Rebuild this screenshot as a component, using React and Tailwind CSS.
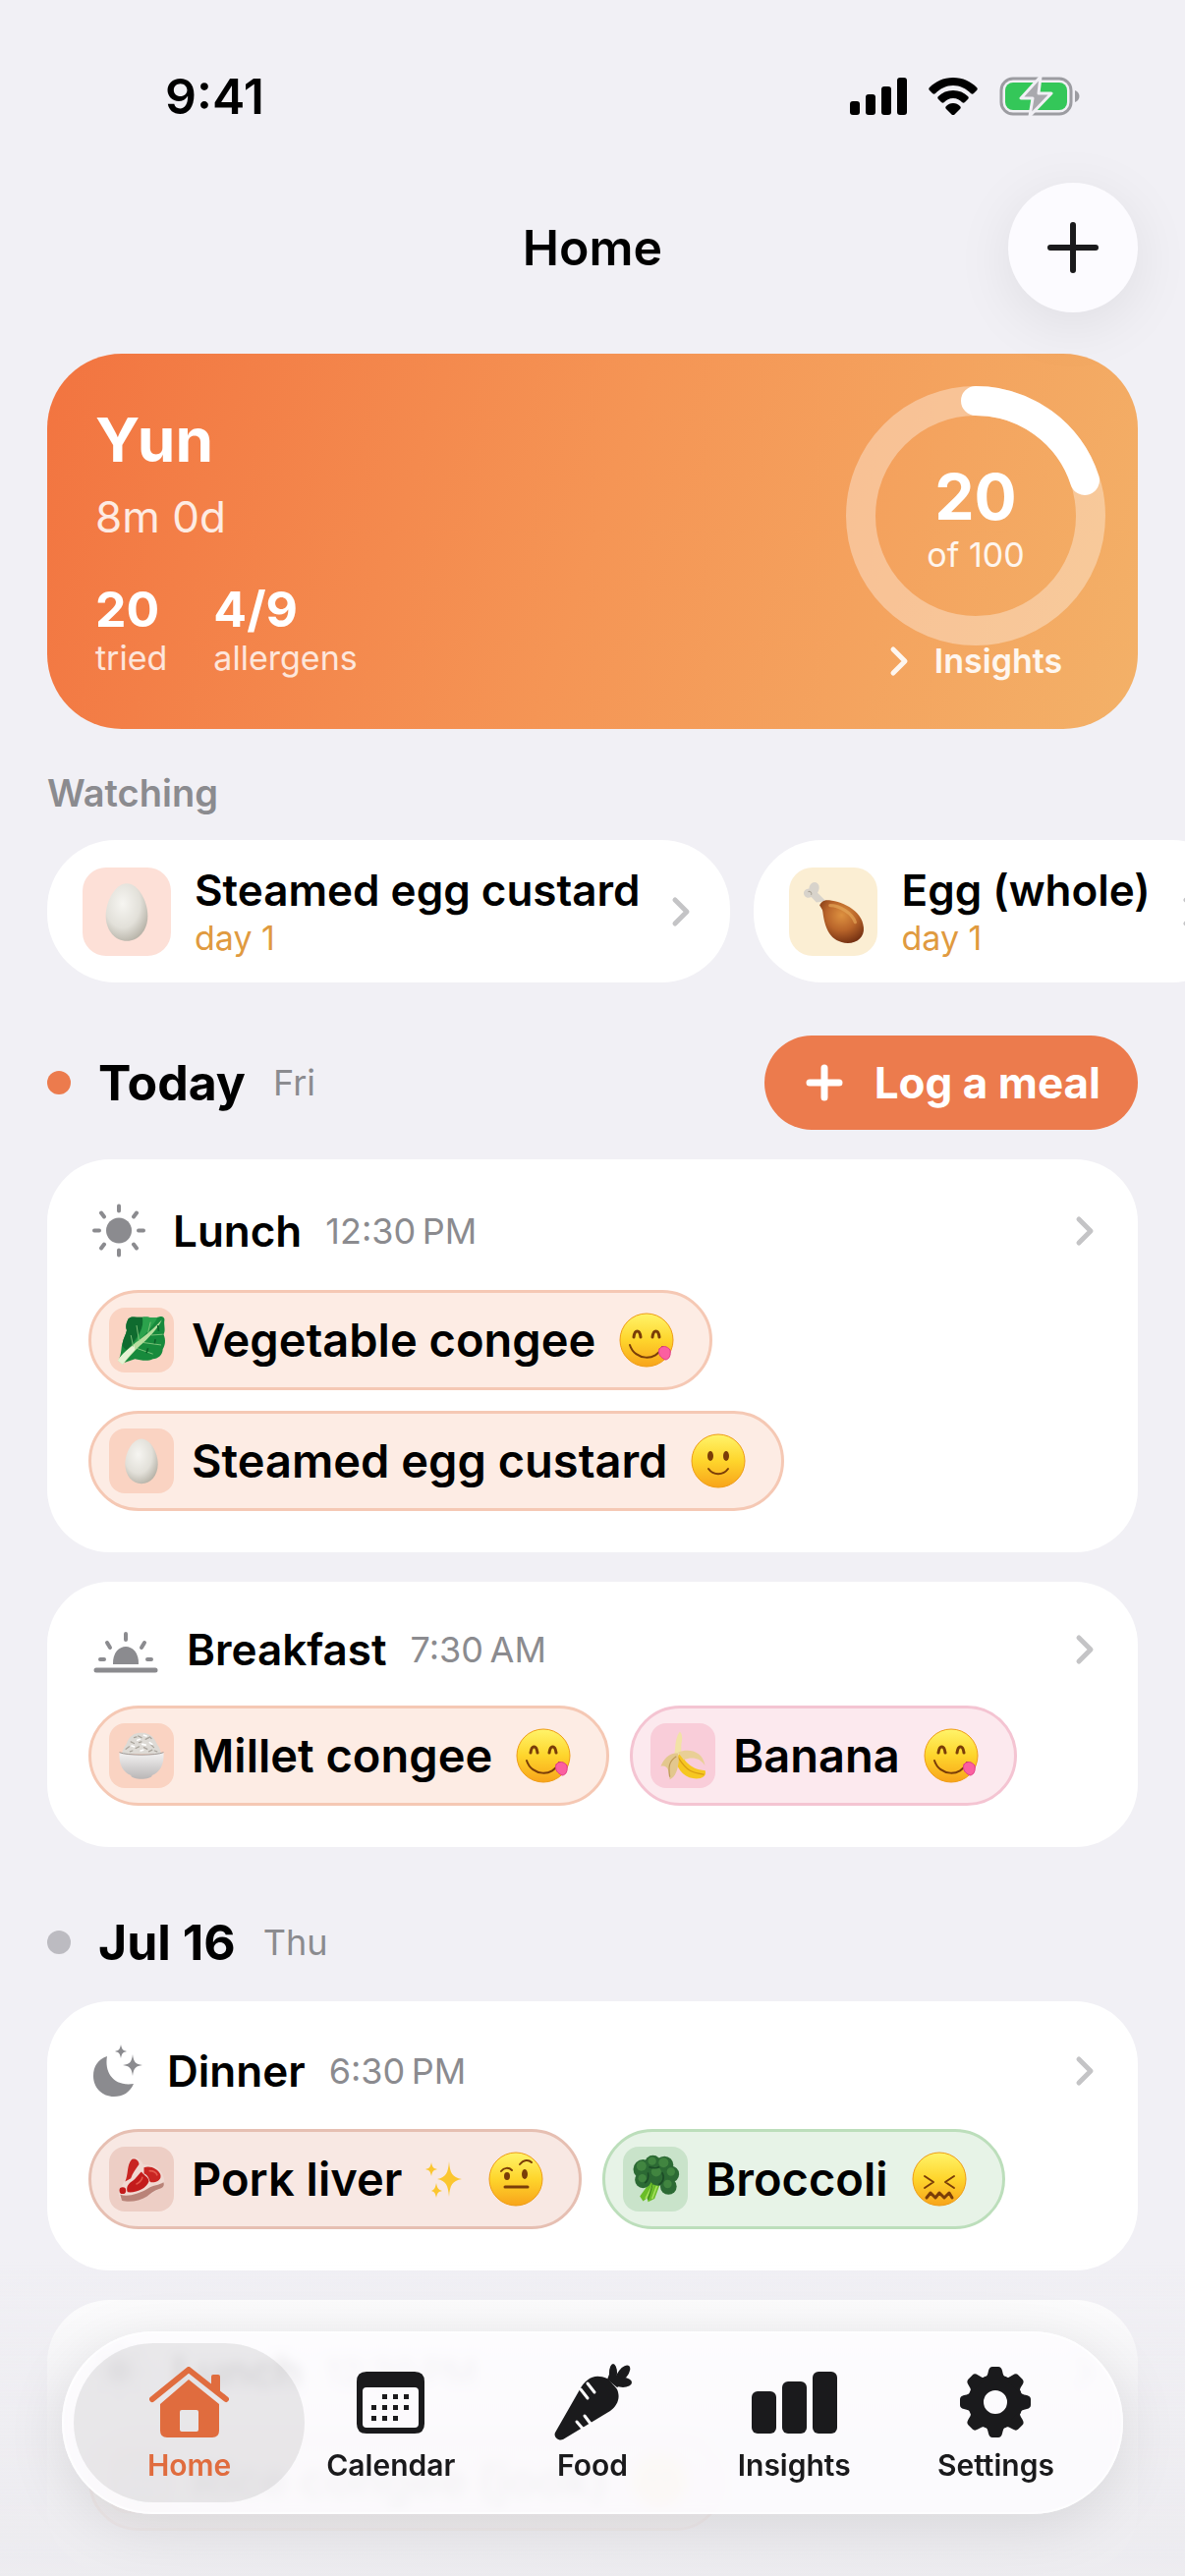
import React, { useState } from 'react';

const watching = [
  { id: 1, name: 'Steamed egg custard', icon: 'egg', day: 'day 1', tile: 'bg-[#fde0d7]' },
  { id: 2, name: 'Egg (whole)', icon: 'drumstick', day: 'day 1', tile: 'bg-[#fbeed3]' },
];

const days = [
  {
    id: 'today',
    title: 'Today',
    weekday: 'Fri',
    dot: 'bg-[#ec7b4d]',
    canLog: true,
    meals: [
      {
        id: 'lunch',
        name: 'Lunch',
        time: '12:30\u202fPM',
        icon: 'sun',
        foods: [
          { name: 'Vegetable congee', icon: 'greens', mood: 'yum', tone: 'orange' },
          { name: 'Steamed egg custard', icon: 'egg', mood: 'smile', tone: 'orange' },
        ],
      },
      {
        id: 'breakfast',
        name: 'Breakfast',
        time: '7:30\u202fAM',
        icon: 'sunrise',
        foods: [
          { name: 'Millet congee', icon: 'rice', mood: 'yum', tone: 'orange' },
          { name: 'Banana', icon: 'banana', mood: 'yum', tone: 'pink' },
        ],
      },
    ],
  },
  {
    id: 'jul16',
    title: 'Jul 16',
    weekday: 'Thu',
    dot: 'bg-[#bcbbc1]',
    canLog: false,
    meals: [
      {
        id: 'dinner',
        name: 'Dinner',
        time: '6:30\u202fPM',
        icon: 'moon',
        foods: [
          { name: 'Pork liver', icon: 'meat', mood: 'doubt', tone: 'red', isNew: true },
          { name: 'Broccoli', icon: 'broccoli', mood: 'yuck', tone: 'green' },
        ],
      },
      {
        id: 'lunch16',
        name: 'Lunch',
        time: '12:30\u202fPM',
        icon: 'sun',
        foods: [{ name: 'Rice congee (jook)', icon: 'rice', mood: 'smile', tone: 'orange' }],
      },
    ],
  },
];

const tones = {
  orange: { chip: 'bg-[#fdece4] border-[#f5c8b4]', tile: 'bg-[#fad3c2]' },
  pink: { chip: 'bg-[#fce9ee] border-[#f4c4d2]', tile: 'bg-[#f9cdd9]' },
  red: { chip: 'bg-[#f8e8e3] border-[#e6bfb2]', tile: 'bg-[#edcec5]' },
  green: { chip: 'bg-[#e7f3e7] border-[#bcdebb]', tile: 'bg-[#c9e3ca]' },
};

/* ---------- food drawings ---------- */

function FoodIcon({ name, className }) {
  return (
    <svg viewBox="0 0 60 60" className={className} aria-hidden="true">
      <defs>
        <radialGradient id="eggShell" cx="0.4" cy="0.35" r="0.7">
          <stop offset="0" stopColor="#f6f5f1" />
          <stop offset="0.6" stopColor="#e2e0d9" />
          <stop offset="1" stopColor="#b5b1a6" />
        </radialGradient>
        <radialGradient id="chicken" cx="0.5" cy="0.35" r="0.7">
          <stop offset="0" stopColor="#dd9140" />
          <stop offset="0.5" stopColor="#b9652a" />
          <stop offset="1" stopColor="#6f2c10" />
        </radialGradient>
        <linearGradient id="bowl" x1="0" y1="0" x2="0" y2="1">
          <stop offset="0" stopColor="#f4f3f3" />
          <stop offset="1" stopColor="#b9b6b6" />
        </linearGradient>
      </defs>
      {name === 'egg' && (
        <path d="M30 3C41 3 50 20 50 34S41 58 30 58 10 48 10 34 19 3 30 3Z" fill="url(#eggShell)" />
      )}
      {name === 'drumstick' && (
        <>
          <path d="M14 21 9 16C5 18 1 15 2 11 3 9 5 8 7 8 7 4 11 0 15 3 18 6 16 10 15 12L23 20Z" fill="#d8d3cb" />
          <path d="M6 11C8 10 10 12 9 14" stroke="#aaa397" strokeWidth="1" fill="none" />
          <path d="M17 24C18 21 21 19 24 19 36 19 58 28 59 45 60 54 53 60 44 60 27 59 22 46 20 30 20 28 18 26 17 24Z" fill="url(#chicken)" />
          <path d="M27 24C36 24 48 31 51 40" stroke="#eaae5e" strokeWidth="3" strokeLinecap="round" fill="none" opacity="0.6" />
        </>
      )}
      {name === 'greens' && (
        <>
          <path d="M14 4C18 0 25 3 31 2 38 1 44 4 50 2 54 0 59 2 58 6 57 12 60 18 57 23 60 30 59 36 56 41 56 48 50 53 44 53 37 57 28 54 22 53L8 58 3 52C6 44 5 38 7 33 8 27 11 24 12 18 10 13 12 8 14 4Z" fill="#178a3c" />
          <path d="M14 4C18 0 25 3 31 2 34 12 28 24 12 42 8 40 6 37 7 33 8 27 11 24 12 18 10 13 12 8 14 4Z" fill="#0f6b2f" />
          <path d="M31 2C40 1 44 4 50 2 42 16 28 30 14 44 26 28 34 14 31 2Z" fill="#2ba24c" />
          <path d="M1 55C8 44 22 34 30 28 40 20 48 13 55 5 50 16 38 28 28 37 20 45 12 54 7 60Z" fill="#b9dea0" />
          <path d="M1 55C6 47 14 41 21 36L22 42C16 48 11 54 7 60Z" fill="#e6f3d4" />
          <path d="M20 38 17 24M27 31 24 12M38 21 41 8M24 40 44 47M32 33 54 36M42 24 56 23" stroke="#8bcb82" strokeWidth="1" fill="none" />
          <path d="M47 29 46 34M38 40 36 46M50 12 51 19" stroke="#0c6129" strokeWidth="2" fill="none" />
        </>
      )}
      {name === 'rice' && (
        <>
          <path d="M6 28C7 20 12 17 13 12 18 3 24 2 30 2S43 4 47 12C49 17 53 20 54 28Z" fill="#dddad5" />
          <path d="M11 22l4-3M17 13l4 2M26 6l4 2M35 10l4-2M42 17l3 3M23 21l4-2M33 20l4 2M16 25l3-1M39 25l4-2M27 14l3-1M46 24l3 1M21 8l3-1M40 7l2 2" stroke="#a9a49c" strokeWidth="1.500" strokeLinecap="round" />
          <path d="M18 18l3 1M25 11l3-1M31 16l4 1M40 14l3 2M29 24l3-1M33 5l3 1" stroke="#ffffff" strokeWidth="2" strokeLinecap="round" />
          <path d="M3 26C12 30 48 30 57 26 58 42 52 50 43 54 42 60 18 60 17 54 8 50 2 42 3 26Z" fill="url(#bowl)" />
          <path d="M3 26C12 30 48 30 57 26" fill="none" stroke="#8e8a89" strokeWidth="1" />
        </>
      )}
      {name === 'banana' && (
        <>
          <path d="M26 1C29 2 30 9 28 16L28 33 18 34C22 24 19 11 26 1Z" fill="#f2e2a6" />
          <path d="M27 27C35 44 49 48 57 48 59 53 56 57 49 58 36 59 23 51 21 33Z" fill="#f6c721" />
          <path d="M24 26C37 21 54 24 57 42 51 33 42 31 31 35Z" fill="#e9cf96" />
          <path d="M24 32C36 51 43 51 56 53" stroke="#d89c15" strokeWidth="1.500" fill="none" />
          <path d="M24 27C14 26 7 33 3 43 11 41 13 47 14 59 21 56 24 47 25 36Z" fill="#e3c78e" />
          <path d="M22 31C13 37 12 43 14 56" stroke="#bf9a57" strokeWidth="1.500" fill="none" />
        </>
      )}
      {name === 'meat' && (
        <>
          <path d="M18 4C23 2 30 6 32 12 38 13 47 13 52 19 57 24 59 32 57 39 50 43 44 46 37 51 28 57 14 59 6 56 2 52 1 46 3 42 7 38 8 34 10 30 14 22 12 10 18 4Z" fill="#f0d9d2" />
          <path d="M4 49C14 52 26 48 37 42 45 37 51 38 57 34 58 38 57 40 54 41 47 43 43 46 37 51 28 57 14 59 6 56Z" fill="#b98378" />
          <path d="M18 6C23 4 27 8 27 12 23 18 19 23 17 29L10 33C14 25 12 12 18 6Z" fill="#c92522" />
          <path d="M33 16C41 13 50 18 53 24 55 30 50 34 43 34 38 34 41 27 33 23Z" fill="#c92522" />
          <path d="M30 21C33 26 39 27 39 33 36 41 25 47 13 46 11 41 13 36 18 33 24 29 26 24 30 21Z" fill="#c31b1b" />
          <ellipse cx="7" cy="44" rx="4" ry="4" fill="#c31b1b" />
          <path d="M24 36C28 34 31 30 31 28M40 20C45 20 48 22 49 25" stroke="#e4584c" strokeWidth="2" strokeLinecap="round" fill="none" />
        </>
      )}
      {name === 'broccoli' && (
        <>
          <path d="M24 33 11 51 15 57 20 53 21 58 29 54 35 38Z" fill="#6abd28" />
          <path d="M27 37 18 54M32 38 26 54" stroke="#a4df5a" strokeWidth="2" fill="none" />
          <path d="M28 32 21 55" stroke="#3c8a1b" strokeWidth="1.500" fill="none" />
          <g fill="#2c6a34">
            <circle cx="15" cy="18" r="12" />
            <circle cx="27" cy="11" r="10" />
            <circle cx="41" cy="13" r="11" />
            <circle cx="49" cy="24" r="10" />
            <circle cx="34" cy="25" r="13" />
            <circle cx="15" cy="31" r="10" />
            <circle cx="46" cy="39" r="10" />
          </g>
          <g fill="#4b9146" opacity="0.7">
            <circle cx="13" cy="14" r="6" />
            <circle cx="26" cy="8" r="5" />
            <circle cx="40" cy="10" r="6" />
            <circle cx="49" cy="21" r="5" />
            <circle cx="31" cy="21" r="6" />
            <circle cx="14" cy="29" r="5" />
            <circle cx="45" cy="36" r="5" />
          </g>
          <path d="M21 22C22 28 20 33 17 35M38 22C42 28 39 35 34 37M22 15C26 17 32 17 35 15" stroke="#1c4d27" strokeWidth="2" fill="none" />
        </>
      )}
    </svg>
  );
}

function Mood({ name }) {
  return (
    <svg viewBox="0 0 56 56" className="size-14 shrink-0" aria-hidden="true">
      <defs>
        <linearGradient id="face" x1="0" y1="0" x2="0" y2="1">
          <stop offset="0" stopColor="#fff46a" />
          <stop offset="0.5" stopColor="#fed52c" />
          <stop offset="1" stopColor="#f8a41a" />
        </linearGradient>
      </defs>
      <circle cx="28" cy="28" r="27" fill="url(#face)" stroke="#ef9c14" strokeWidth="1" />
      {name === 'yum' && (
        <g fill="none" stroke="#7a3d08" strokeWidth="2" strokeLinecap="round">
          <path d="M15 25C16 17 21 17 22 25M34 25C35 17 40 17 41 25" strokeWidth="3" />
          <path d="M11 33C16 49 38 50 44 35" />
          <path d="M41 37C44 33 49 34 52 38 53 43 51 48 47 48 43 46 39 43 41 37Z" fill="#fb5fa0" stroke="#e03c86" strokeWidth="1" />
        </g>
      )}
      {name === 'smile' && (
        <>
          <ellipse cx="20" cy="23" rx="3" ry="5" fill="#7a3d08" />
          <ellipse cx="36" cy="23" rx="3" ry="5" fill="#7a3d08" />
          <path d="M18 36C23 43 33 43 38 36" fill="none" stroke="#7a3d08" strokeWidth="2" strokeLinecap="round" />
        </>
      )}
      {name === 'doubt' && (
        <>
          <ellipse cx="19" cy="25" rx="3" ry="4" fill="#7a3d08" />
          <ellipse cx="37" cy="23" rx="3" ry="5" fill="#7a3d08" />
          <path d="M13 20C16 16 21 16 24 19M32 13C36 8 41 8 44 11" fill="none" stroke="#7a3d08" strokeWidth="2" strokeLinecap="round" />
          <path d="M17 36H40" stroke="#7a3d08" strokeWidth="3" strokeLinecap="round" />
        </>
      )}
      {name === 'yuck' && (
        <g fill="none" stroke="#7a3d08" strokeWidth="2" strokeLinecap="round" strokeLinejoin="round">
          <path d="M13 25 22 31 13 37M43 25 34 31 43 37" />
          <path d="M15 47 19 42 24 47 28 42 33 47 38 42 41 47" strokeWidth="3" />
        </g>
      )}
    </svg>
  );
}

function Sparkles() {
  return (
    <svg viewBox="0 0 38 38" className="size-[38px] shrink-0" fill="#fbc62f" aria-hidden="true">
      <path d="M24 1C25 13 27 17 37 19 27 21 25 25 24 37 23 25 21 21 12 19 21 17 23 13 24 1Z" />
      <path d="M6 2C7 7 8 8 12 9 8 10 7 11 6 16 5 11 4 10 0 9 4 8 5 7 6 2Z" />
      <path d="M11 23C12 28 13 30 17 31 13 32 12 33 11 38 10 33 9 32 6 31 9 30 10 28 11 23Z" />
    </svg>
  );
}

/* ---------- small symbols ---------- */

function MealIcon({ name }) {
  if (name === 'sunrise') {
    return (
      <svg viewBox="-4 0 76 54" className="h-[54px] w-[76px]" fill="none" stroke="#8b8b8f" strokeWidth="5" strokeLinecap="round" aria-hidden="true">
        <path d="M4 48H64" />
        <path d="M34 11V17M15 20 18 25M53 20 50 25M8 37H12M56 37H60" strokeWidth="4" />
        <path d="M21 42C20 18 48 18 47 42Z" fill="#8b8b8f" stroke="none" />
      </svg>
    );
  }
  if (name === 'moon') {
    return (
      <svg viewBox="0 0 56 58" className="h-[58px] w-14" fill="#8b8b8f" aria-hidden="true">
        <path d="M19 14C16 31 26 45 46 42 42 51 35 55 26 55 14 55 5 46 5 34 5 24 10 17 19 14Z" />
        <path d="M33 2C34 7 35 8 39 9 35 10 34 11 33 16 32 11 31 10 27 9 31 8 32 7 33 2Z" />
        <path d="M45 12C46 20 48 22 55 23 48 24 46 26 45 34 44 26 42 24 35 23 42 22 44 20 45 12Z" />
      </svg>
    );
  }
  return (
    <svg viewBox="-1 0 62 60" className="h-[61px] w-[62px]" fill="none" stroke="#8b8b8f" strokeWidth="4" strokeLinecap="round" aria-hidden="true">
      <circle cx="30" cy="30" r="13" fill="#8b8b8f" stroke="none" />
      <path d="M30 5V10M30 50V55M5 30H10M50 30H55M12 12 15 16M48 12 45 16M12 48 15 44M48 48 45 44" />
    </svg>
  );
}

function Chevron({ className }) {
  return (
    <svg viewBox="0 0 20 32" className={className} fill="none" stroke="currentColor" strokeWidth="5" strokeLinecap="round" strokeLinejoin="round" aria-hidden="true">
      <path d="M4 4 16 16 4 28" />
    </svg>
  );
}

function TabIcon({ name }) {
  if (name === 'Home') {
    return (
      <svg viewBox="0 0 81 72" className="h-[72px] w-[81px]" aria-hidden="true">
        <path d="M3 33 40 3 78 33" fill="none" stroke="currentColor" strokeWidth="6" strokeLinecap="round" strokeLinejoin="round" />
        <path d="M63 22V10Q63 8 65 8H70Q72 8 72 10V30Z" fill="currentColor" />
        <path fillRule="evenodd" d="M40 13 71 38V65Q71 72 64 72H18Q11 72 11 65V38ZM33 44Q31 44 31 46V64Q31 66 33 66H48Q50 66 50 64V46Q50 44 48 44Z" fill="currentColor" />
      </svg>
    );
  }
  if (name === 'Calendar') {
    return (
      <svg viewBox="0 0 69 63" className="h-[63px] w-[69px]" fill="currentColor" aria-hidden="true">
        <path fillRule="evenodd" d="M10 0H59Q69 0 69 10V53Q69 63 59 63H10Q0 63 0 53V10Q0 0 10 0ZM10 16Q6 16 6 20V53Q6 57 10 57H59Q63 57 63 53V20Q63 16 59 16Z" />
        <path d="M26 23h5v5h-5zM37 23h5v5h-5zM48 23h5v5h-5zM15 34h5v5h-5zM26 34h5v5h-5zM37 34h5v5h-5zM48 34h5v5h-5zM15 45h5v5h-5zM26 45h5v5h-5zM37 45h5v5h-5z" />
      </svg>
    );
  }
  if (name === 'Food') {
    return (
      <svg viewBox="0 0 79 78" className="h-[78px] w-[79px]" fill="currentColor" aria-hidden="true">
        <path d="M1 70 25 28C33 13 42 10 54 15 56 17 62 23 64 26 68 35 64 43 57 48L9 77C4 79-1 74 1 70Z" />
        <ellipse cx="60" cy="9" rx="4" ry="9" />
        <ellipse cx="70" cy="10" rx="5" ry="10" transform="rotate(38 70 10)" />
        <ellipse cx="70" cy="19" rx="9" ry="5" />
        <path d="M54 16 57 8 64 12 74 19 64 24Z" />
        <path d="M27 26 34 35M34 20 41 29M23 59 29 66M31 53 37 61" stroke="#fdfcfe" strokeWidth="3" strokeLinecap="round" />
      </svg>
    );
  }
  if (name === 'Insights') {
    return (
      <svg viewBox="0 0 87 63" className="h-[63px] w-[87px]" fill="currentColor" aria-hidden="true">
        <rect x="0" y="20" width="25" height="43" rx="6" />
        <rect x="31" y="10" width="25" height="53" rx="6" />
        <rect x="62" y="0" width="25" height="63" rx="6" />
      </svg>
    );
  }
  return (
    <svg viewBox="0 0 72 72" className="size-[72px]" fill="currentColor" aria-hidden="true">
      <circle cx="36" cy="36" r="20" fill="none" stroke="currentColor" strokeWidth="16" />
      {[0, 45, 90, 135, 180, 225, 270, 315].map((angle) => (
        <path key={angle} transform={`rotate(${angle} 36 36)`} d="M25 12Q28 10 29 4 30 0 33 0H39Q42 0 43 4 44 10 47 12Z" />
      ))}
    </svg>
  );
}

/* ---------- sections ---------- */

function StatusBar() {
  return (
    <div className="flex h-[156px] items-center justify-between pt-10 pr-[107px] pl-[168px]">
      <span className="text-[50px] leading-[60px] font-semibold">9:41</span>
      <div className="flex items-center gap-[22px]">
        <svg viewBox="0 0 58 38" className="h-[38px] w-[58px]" aria-hidden="true">
          <rect x="0" y="24" width="10" height="14" rx="3" />
          <rect x="16" y="17" width="10" height="21" rx="3" />
          <rect x="32" y="9" width="10" height="29" rx="3" />
          <rect x="48" y="0" width="10" height="38" rx="3" />
        </svg>
        <svg viewBox="0 0 50 38" className="h-[38px] w-[50px]" aria-hidden="true">
          <path d="M25 0C35 0 43 4 49 10 50 11 50 12 49 13L46 16C45 17 44 17 43 16 38 11 32 8 25 8S12 11 7 16C6 17 5 17 4 16L1 13C0 12 0 11 1 10 7 4 15 0 25 0Z" />
          <path d="M25 13C31 13 36 15 40 19 41 20 41 21 40 22L37 25C36 26 35 26 34 25 32 23 29 21 25 21S18 23 16 25C15 26 14 26 13 25L10 22C9 21 9 20 10 19 14 15 19 13 25 13Z" />
          <path d="M25 26C28 26 30 27 32 29 33 30 33 31 32 32L26 38H24L18 32C17 31 17 30 18 29 20 27 22 26 25 26Z" />
        </svg>
        <svg viewBox="0 0 82 42" className="h-[42px] w-[82px]" aria-hidden="true">
          <rect x="2" y="3" width="71" height="36" rx="12" fill="none" stroke="#9c9ca1" strokeWidth="3" />
          <path d="M77 15C83 17 83 25 77 27Z" fill="#9c9ca1" />
          <rect x="6" y="7" width="63" height="28" rx="8" fill="#34c759" />
          <path d="M42 1 22 23H34L31 41 53 18H40Z" fill="#a9a9ae" stroke="#f1f0f5" strokeWidth="3" strokeLinejoin="round" />
        </svg>
      </div>
    </div>
  );
}

function ProfileCard() {
  return (
    <section className="flex justify-between rounded-[76px] bg-linear-[108deg,#f27440_0%,#f59555_50%,#f3b168_100%] pr-[33px] pl-[49px] text-white">
      <div className="pt-12 pb-[52px]">
        <h2 className="text-[62px] leading-[80px] font-bold">Yun</h2>
        <p className="mt-2 text-[44px] leading-[60px] text-white/85">8m 0d</p>
        <dl className="mt-[34px] flex gap-[47px]">
          <div className="flex flex-col-reverse">
            <dt className="text-[34px] leading-10 text-white/80">tried</dt>
            <dd className="text-[50px] leading-[60px] font-bold">20</dd>
          </div>
          <div className="flex flex-col-reverse">
            <dt className="text-[34px] leading-10 text-white/80">allergens</dt>
            <dd className="text-[50px] leading-[60px] font-bold">4/9</dd>
          </div>
        </dl>
      </div>
      <div className="flex flex-col items-center pt-[33px]">
        <div className="relative size-[264px]">
          <svg viewBox="0 0 264 264" className="size-full" fill="none" stroke="#ffffff" strokeWidth="30" aria-hidden="true">
            <circle cx="132" cy="132" r="117" strokeOpacity="0.35" />
            <path d="M132 15A117 117 0 0 1 243 96" strokeLinecap="round" />
          </svg>
          <div className="absolute inset-0 flex flex-col items-center justify-center pt-4">
            <span className="text-[64px] leading-[64px] font-bold">20</span>
            <span className="text-[34px] leading-[54px] text-white/90">of 100</span>
          </div>
        </div>
        <a href="#insights" className="-mt-1 flex items-center gap-[26px] text-[34px] leading-10 font-semibold text-white/90">
          <Chevron className="h-8 w-5" />
          Insights
        </a>
      </div>
    </section>
  );
}

function WatchCard({ item }) {
  return (
    <button type="button" className="flex h-[145px] shrink-0 items-center rounded-[70px] bg-white pr-10 pl-9 text-left">
      <span className={`flex size-[90px] items-center justify-center rounded-3xl ${item.tile}`}>
        <FoodIcon name={item.icon} className="size-16" />
      </span>
      <span className="ml-6 flex flex-col pb-0.5">
        <span className="text-[44px] leading-[56px] font-semibold whitespace-nowrap">{item.name}</span>
        <span className="text-[34px] leading-[42px] text-[#e09a3f]">{item.day}</span>
      </span>
      <Chevron className="ml-8 h-8 w-5 text-[#c4c4c6]" />
    </button>
  );
}

function FoodChip({ food }) {
  const tone = tones[food.tone];
  return (
    <li className={`flex h-[102px] items-center rounded-full border-3 pr-9 pl-[18px] ${tone.chip}`}>
      <span className={`flex size-[66px] items-center justify-center rounded-2xl ${tone.tile}`}>
        <FoodIcon name={food.icon} className="size-[50px]" />
      </span>
      <span className="mr-6 ml-[18px] text-[47px] leading-[60px] font-semibold whitespace-nowrap">{food.name}</span>
      <span className="flex items-center gap-[26px]">
        {food.isNew && <Sparkles />}
        <Mood name={food.mood} />
      </span>
    </li>
  );
}

function MealCard({ meal }) {
  return (
    <article className="rounded-[64px] bg-white p-[42px]">
      <header className="flex items-center">
        <MealIcon name={meal.icon} />
        <h3 className="ml-6 text-[44px] leading-[54px] font-semibold">{meal.name}</h3>
        <time className="ml-6 text-[36px] leading-[54px] text-[#8b8b8f]">{meal.time}</time>
        <Chevron className="mr-0.5 ml-auto h-8 w-5 text-[#c4c4c6]" />
      </header>
      <ul className="mt-[30px] flex flex-wrap gap-[21px]">
        {meal.foods.map((food) => (
          <FoodChip key={food.name} food={food} />
        ))}
      </ul>
    </article>
  );
}

function DaySection({ day }) {
  return (
    <section className={day.canLog ? 'mt-[54px]' : 'mt-[67px]'}>
      <div className="flex items-center">
        <span className={`size-6 rounded-full ${day.dot}`} />
        <h2 className="ml-7 text-[50px] leading-[60px] font-bold">{day.title}</h2>
        <span className="ml-7 text-[36px] leading-[60px] text-[#8b8b8f]">{day.weekday}</span>
        {day.canLog && (
          <button type="button" className="ml-auto flex h-24 items-center gap-8 rounded-full bg-[#ec7b4d] pr-[38px] pl-[42px] text-[44px] leading-[54px] font-bold text-white">
            <svg viewBox="0 0 38 38" className="size-[38px]" stroke="currentColor" strokeWidth="7" strokeLinecap="round" aria-hidden="true">
              <path d="M19 4V34M4 19H34" />
            </svg>
            Log a meal
          </button>
        )}
      </div>
      <div className="mt-[30px] flex flex-col gap-[30px]">
        {day.meals.map((meal) => (
          <MealCard key={meal.id} meal={meal} />
        ))}
      </div>
    </section>
  );
}

function TabBar() {
  const [active, setActive] = useState('Home');
  const tabs = ['Home', 'Calendar', 'Food', 'Insights', 'Settings'];

  return (
    <nav className="fixed inset-x-[63px] bottom-[63px] flex h-[186px] items-center rounded-full bg-[#fefdff]/80 px-[27px] shadow-[0_12px_60px_rgba(0,0,0,0.1)] inset-ring-2 inset-ring-white/60 backdrop-blur-[6px]">
      {tabs.map((tab) => (
        <button
          key={tab}
          type="button"
          onClick={() => setActive(tab)}
          className={`-mx-[15px] flex h-[162px] flex-1 basis-0 flex-col items-center rounded-full pt-[18px] ${
            active === tab ? 'bg-black/8 text-[#e06c3e]' : 'text-[#1a1a1c]'
          }`}
        >
          <span className="flex h-[84px] items-center">
            <TabIcon name={tab} />
          </span>
          <span className="mt-1 text-[30px] leading-9 font-semibold">{tab}</span>
        </button>
      ))}
    </nav>
  );
}

function App() {
  return (
    <div className="h-screen overflow-hidden bg-[#f1f0f5] font-['Inter','Noto_Sans',sans-serif] text-black">
      <StatusBar />
      <header className="grid grid-cols-[1fr_auto_1fr] items-center px-12 pt-[30px] pb-[42px]">
        <h1 className="col-start-2 text-[50px] leading-[60px] font-semibold">Home</h1>
        <button type="button" aria-label="Add" className="flex size-[132px] items-center justify-center justify-self-end rounded-full bg-[#fcfbff] shadow-[0_12px_60px_rgba(0,0,0,0.08)]">
          <svg viewBox="0 0 54 54" className="size-[54px]" stroke="#1a1a1c" strokeWidth="6" strokeLinecap="round" aria-hidden="true">
            <path d="M27 4V50M4 27H50" />
          </svg>
        </button>
      </header>
      <main className="px-12">
        <ProfileCard />
        <h2 className="mt-[41px] text-[38px] leading-[48px] font-semibold text-[#8b8b8f]">Watching</h2>
        <div className="-mr-12 mt-6 flex gap-6 overflow-hidden">
          {watching.map((item) => (
            <WatchCard key={item.id} item={item} />
          ))}
        </div>
        {days.map((day) => (
          <DaySection key={day.id} day={day} />
        ))}
      </main>
      <div className="pointer-events-none fixed inset-x-0 bottom-0 h-[320px] bg-linear-to-b from-[#f1f0f5]/0 via-[#eeedf1]/75 via-45% to-[#ecebef]/95" />
      <TabBar />
    </div>
  );
}

export default App;
